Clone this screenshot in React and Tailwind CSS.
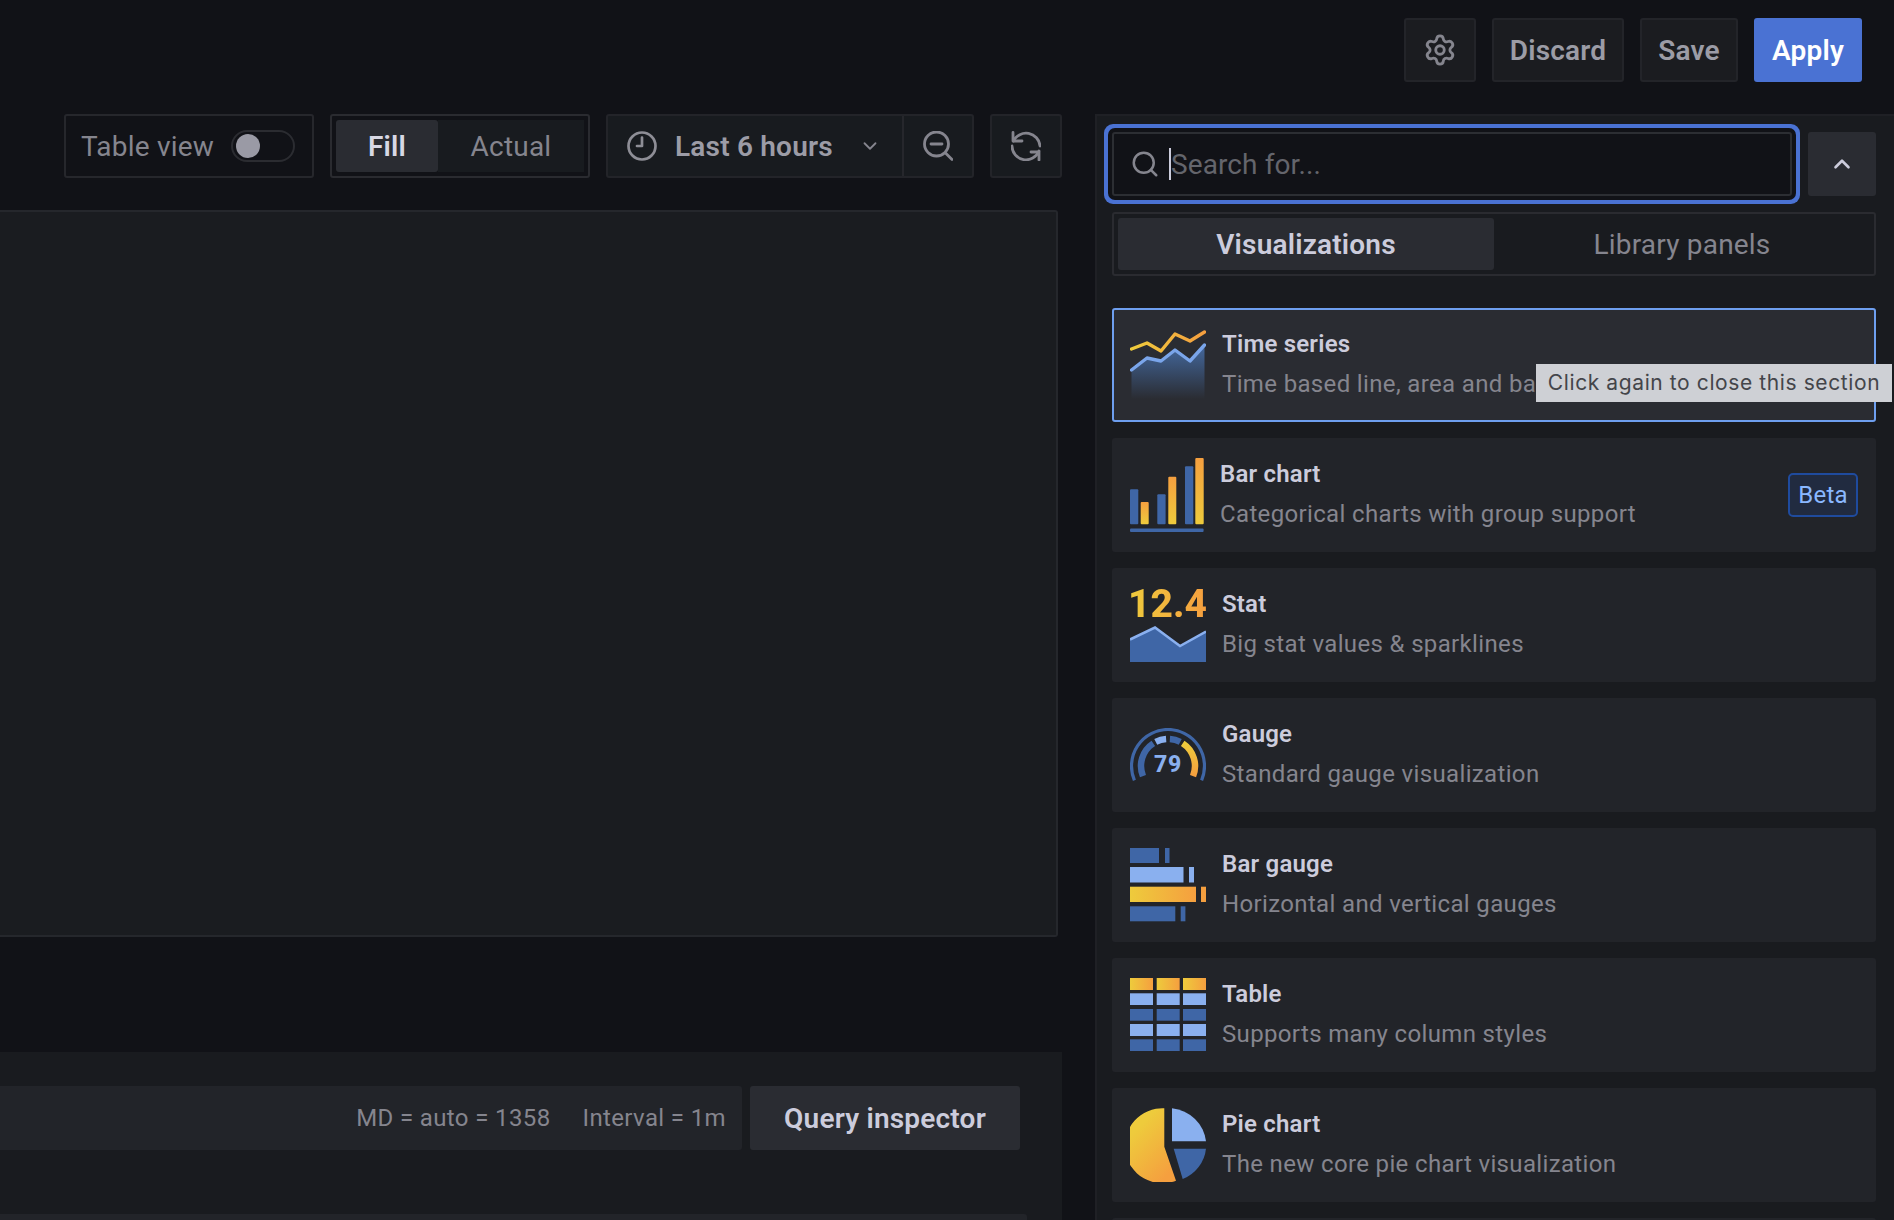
import React from "react";
import { ChevronDown, ChevronUp, Search, Settings } from "lucide-react";

const YELLOW = "#eecb3c";
const ORANGE = "#f59f3f";
const BLUE = "#3f66a6";
const LIGHT = "#8ab0ef";

const Grad = ({ id, vertical, from = YELLOW, to = ORANGE }) => (
  <defs>
    <linearGradient id={id} x1="0" y1={vertical ? "1" : "0"} x2={vertical ? "0" : "1"} y2="0">
      <stop offset="0" stopColor={from} />
      <stop offset="1" stopColor={to} />
    </linearGradient>
  </defs>
);

const TimeSeriesIcon = () => (
  <svg width="76" height="70" viewBox="0 0 76 70">
    <defs>
      <linearGradient id="tsFill" x1="0" y1="0" x2="0" y2="1">
        <stop offset="0" stopColor="#44699f" />
        <stop offset="1" stopColor="#44699f" stopOpacity="0" />
      </linearGradient>
    </defs>
    <Grad id="tsLine" />
    <path d="M1.5 40L17 28L31 31L45 20L60 31L74.5 15V69H1.5Z" fill="url(#tsFill)" />
    <path d="M1.5 40L17 28L31 31L45 20L60 31L74.5 15" fill="none" stroke="#7aa5ea" strokeWidth="3.4" strokeLinecap="round" strokeLinejoin="round" />
    <path d="M1.5 19L17 13L31 21L45 4L60 11L74.5 2" fill="none" stroke="url(#tsLine)" strokeWidth="3.4" strokeLinecap="round" strokeLinejoin="round" />
  </svg>
);

const BarChartIcon = () => (
  <svg width="74" height="74" viewBox="0 0 74 74">
    <Grad id="bcBar" vertical />
    <rect x="0" y="31.3" width="8.3" height="35" rx="1" fill={BLUE} />
    <rect x="10.7" y="44" width="8" height="22.3" rx="1" fill="url(#bcBar)" />
    <rect x="27.3" y="36.3" width="8.3" height="30" rx="1" fill={BLUE} />
    <rect x="38.3" y="18.7" width="8" height="47.6" rx="1" fill="url(#bcBar)" />
    <rect x="55" y="8.3" width="8.3" height="58" rx="1" fill={BLUE} />
    <rect x="65.3" y="0" width="8.4" height="66.3" rx="1" fill="url(#bcBar)" />
    <rect x="0" y="70.4" width="73.6" height="3.6" rx="1" fill={BLUE} />
  </svg>
);

const StatIcon = () => (
  <div className="w-[76px]">
    <div className="-ml-[2px] h-[33px] text-[39px] leading-[33px] font-extrabold tracking-normal bg-linear-to-r from-[#eecb3c] to-[#f59f3f] bg-clip-text text-transparent whitespace-nowrap">
      12.4
    </div>
    <svg width="76" height="41" viewBox="0 33 76 41" className="block">
      <path d="M0 51.5L25 39.5L50 58L76 43.5V74H0Z" fill={BLUE} />
      <path d="M0 51.5L25 39.5L50 58L76 43.5" fill="none" stroke={LIGHT} strokeWidth="2.5" />
    </svg>
  </div>
);

// angles in degrees, clockwise from the top
const arc = (r, a, b) => {
  const pt = (d) => {
    const t = (d * Math.PI) / 180;
    return `${38 + r * Math.sin(t)} ${38 - r * Math.cos(t)}`;
  };
  return `M${pt(a)}A${r} ${r} 0 ${b - a > 180 ? 1 : 0} 1 ${pt(b)}`;
};

const GaugeIcon = () => (
  <svg width="76" height="54" viewBox="0 0 76 54">
    <Grad id="ggArc" vertical from={ORANGE} to={YELLOW} />
    <path d={arc(36.5, -113, 113)} fill="none" stroke={BLUE} strokeWidth="3.2" />
    <path d={arc(27, -112, -33)} fill="none" stroke={BLUE} strokeWidth="6.5" />
    <path d={arc(27, -27, -4)} fill="none" stroke={LIGHT} strokeWidth="6.5" />
    <path d={arc(27, 4, 27)} fill="none" stroke={BLUE} strokeWidth="6.5" />
    <path d={arc(27, 33, 112)} fill="none" stroke="url(#ggArc)" strokeWidth="6.5" />
    <text x="38" y="44" textAnchor="middle" fontFamily="Roboto, sans-serif" fontWeight="800" fontSize="23" letterSpacing="0.8" fill={LIGHT}>
      79
    </text>
  </svg>
);

const BarGaugeIcon = () => (
  <svg width="76" height="74" viewBox="0 0 76 74">
    <Grad id="bgBar" />
    <rect x="0" y="0" width="29" height="15" fill={BLUE} />
    <rect x="35" y="0" width="4.5" height="15" fill={BLUE} />
    <rect x="0" y="19" width="53.5" height="15.5" fill={LIGHT} />
    <rect x="59" y="19" width="5" height="15.5" fill={LIGHT} />
    <rect x="0" y="38.7" width="66" height="15.3" fill="url(#bgBar)" />
    <rect x="71" y="38.7" width="5" height="15.3" fill={ORANGE} />
    <rect x="0" y="58.3" width="45.3" height="15" fill={BLUE} />
    <rect x="50.7" y="58.3" width="4.7" height="15" fill={BLUE} />
  </svg>
);

const TableIcon = () => {
  const rows = [
    [0, 12, "url(#tbTop)"],
    [15.3, 11.7, LIGHT],
    [31, 11.7, BLUE],
    [46, 12, LIGHT],
    [61.3, 11.7, BLUE],
  ];
  return (
    <svg width="76" height="74" viewBox="0 0 76 74">
      <Grad id="tbTop" />
      {rows.map(([y, h, fill]) =>
        [0, 26.7, 53].map((x) => <rect key={`${x}-${y}`} x={x} y={y} width="23" height={h} fill={fill} />)
      )}
    </svg>
  );
};

const PieIcon = () => (
  <svg width="76" height="74" viewBox="0 0 76 74">
    <defs>
      <linearGradient id="pieFill" x1="0.2" y1="0.3" x2="0.7" y2="1">
        <stop offset="0" stopColor={YELLOW} />
        <stop offset="1" stopColor={ORANGE} />
      </linearGradient>
    </defs>
    <path d="M34.3 0.3A37.5 37.5 0 1 0 46 72.7L34.3 38.7Z" fill="url(#pieFill)" />
    <path d="M42 0.3A38 37 0 0 1 76 33.3H42Z" fill={LIGHT} />
    <path d="M43.7 40.7H76A38 37 0 0 1 52.7 71Z" fill={BLUE} />
  </svg>
);

const ClockIcon = () => (
  <svg width="30" height="30" viewBox="0 0 30 30" fill="none" stroke="#8e8e96" strokeWidth="2.7" strokeLinecap="round" strokeLinejoin="round">
    <circle cx="15" cy="15" r="13.5" />
    <path d="M15 6.5V15H10" />
  </svg>
);

const ZoomOutIcon = () => (
  <svg width="30" height="30" viewBox="0 0 30 30" fill="none" stroke="#85858e" strokeWidth="2.8" strokeLinecap="round">
    <circle cx="13.5" cy="13" r="12" />
    <path d="M8 13H19M22.5 22L29 28.5" />
  </svg>
);

const SyncIcon = () => (
  <svg width="30" height="30" viewBox="0 0 30 30" fill="none" stroke="#85858e" strokeWidth="2.8" strokeLinecap="round" strokeLinejoin="round">
    <path d="M2.5 10A14 14 0 0 1 29 15M28 20A14 14 0 0 1 1 15" />
    <path d="M2 1.5V10H11M20 21H28V29" />
  </svg>
);

const vizList = [
  { title: "Time series", desc: "Time based line, area and ba", icon: <TimeSeriesIcon />, active: true },
  { title: "Bar chart", desc: "Categorical charts with group support", icon: <BarChartIcon />, beta: true, narrow: true },
  { title: "Stat", desc: "Big stat values & sparklines", icon: <StatIcon /> },
  { title: "Gauge", desc: "Standard gauge visualization", icon: <GaugeIcon /> },
  { title: "Bar gauge", desc: "Horizontal and vertical gauges", icon: <BarGaugeIcon /> },
  { title: "Table", desc: "Supports many column styles", icon: <TableIcon /> },
  { title: "Pie chart", desc: "The new core pie chart visualization", icon: <PieIcon /> },
];

const VizCard = ({ item }) => (
  <div
    className={`flex items-center h-[114px] shrink-0 rounded-[3px] overflow-hidden ${
      item.active ? "bg-[#2a2c32] border-2 border-[#6e9fef] px-[16px]" : "bg-[#222429] px-[18px]"
    }`}
  >
    <div className={`flex items-center justify-start ${item.narrow ? "w-[74px]" : "w-[76px]"} shrink-0`}>{item.icon}</div>
    <div className="ml-[16px] min-w-0 flex-1 pb-[3px]">
      <div className="text-[24px] leading-[40px] font-semibold text-[#ccccdc] whitespace-nowrap">{item.title}</div>
      <div className="text-[24px] leading-[40px] tracking-[0.35px] text-[#85858e] whitespace-nowrap">{item.desc}</div>
    </div>
    {item.beta && (
      <div className="w-[70px] h-[44px] flex items-center justify-center rounded-[5px] border-2 border-[#1f4b9e] bg-[#212b40] text-[24px] text-[#8ab8ff]">
        Beta
      </div>
    )}
  </div>
);

const App = () => {
  return (
    <div className="relative w-[1894px] h-[1220px] overflow-hidden bg-[#111217] font-['Roboto',sans-serif] tracking-[0.0125em]">
      <div className="flex justify-end h-[114px] pt-[18px] pr-[32px] gap-[16px]">
        <button className="w-[72px] h-[64px] flex items-center justify-center rounded-[3px] bg-[#1b1c20] border-2 border-[#232429] text-[#85858e]">
          <Settings size={34} strokeWidth={2} />
        </button>
        <button className="w-[132px] h-[64px] pt-[2px] rounded-[3px] bg-[#1b1c20] border-2 border-[#232429] text-[28px] font-semibold text-[#9c9ca6]">
          Discard
        </button>
        <button className="w-[98px] h-[64px] pt-[2px] rounded-[3px] bg-[#1b1c20] border-2 border-[#232429] text-[28px] font-semibold text-[#9c9ca6]">
          Save
        </button>
        <button className="w-[108px] h-[64px] pt-[2px] rounded-[3px] bg-[#4a72d3] text-[28px] font-semibold text-white">Apply</button>
      </div>

      <div className="flex h-[1106px]">
        <div className="w-[1095px] shrink-0 flex flex-col overflow-hidden">
          <div className="flex h-[64px] shrink-0 pl-[64px]">
            <div className="w-[250px] flex items-center rounded-[3px] border-2 border-[#26272c] pl-[15px] text-[28px] text-[#85858e]">
              <span className="pt-[2px]">Table view</span>
              <div className="ml-[17px] w-[64px] h-[32px] rounded-full border-2 border-[#2b2c31] flex items-center pl-[3px]">
                <div className="w-[24px] h-[24px] rounded-full bg-[#9a9aa5]" />
              </div>
            </div>
            <div className="ml-[16px] w-[260px] flex items-stretch rounded-[3px] border-2 border-[#2a2b30] p-[4px] text-[28px]">
              <div className="w-[102px] pt-[2px] flex items-center justify-center rounded-[3px] bg-[#2a2c32] font-semibold text-[#d8d8e4]">Fill</div>
              <div className="flex-1 pt-[2px] flex items-center justify-center bg-[#181b1f] text-[#85858e]">Actual</div>
            </div>
            <div className="ml-[16px] w-[368px] flex items-center rounded-[3px] border-2 border-[#232429] bg-[#181b1f] text-[#9c9ca6]">
              <div className="flex-1 flex items-center pl-[19px]">
                <ClockIcon />
                <span className="ml-[18px] pt-[2px] text-[28px] font-semibold">Last 6 hours</span>
                <ChevronDown size={22} strokeWidth={2} className="ml-[26px] text-[#85858e]" />
              </div>
              <div className="w-[70px] h-full flex items-center justify-center border-l-2 border-[#26272c]">
                <ZoomOutIcon />
              </div>
            </div>
            <div className="ml-[16px] w-[72px] flex items-center justify-center rounded-[3px] border-2 border-[#232429] bg-[#181b1f]">
              <SyncIcon />
            </div>
          </div>

          <div className="mt-[32px] w-[1058px] h-[727px] shrink-0 rounded-r-[3px] bg-[#1a1c20] border-t-2 border-r-2 border-b-2 border-[#25272c]" />

          <div className="mt-[115px] w-[1062px] flex-1 min-h-0 overflow-hidden bg-[#191b1f] pt-[34px]">
            <div className="flex h-[64px]">
              <div className="w-[742px] flex items-center justify-end gap-[32px] pr-[16px] rounded-r-[3px] bg-[#222429] text-[24px] tracking-[0.37px] text-[#85858e]">
                <span>MD = auto = 1358</span>
                <span>Interval = 1m</span>
              </div>
              <button className="ml-[8px] w-[270px] pt-[2px] rounded-[3px] bg-[#2a2c32] text-[28px] font-semibold text-[#ccccdc]">
                Query inspector
              </button>
            </div>
            <div className="mt-[64px] w-[1027px] h-[20px] rounded-r-[3px] bg-[#222429]" />
          </div>
        </div>

        <div className="flex-1 bg-[#191b1f] border-l-2 border-t-2 border-[#1f2025] pl-[15px] pr-[18px] flex flex-col">
          <div className="flex h-[64px] mt-[16px] shrink-0">
            <div className="flex-1 h-[64px] flex items-center rounded-[3px] bg-[#111217] border-2 border-[#2c2e33] shadow-[0_0_0_4px_#111217,0_0_0_8px_#4a72d3] pl-[16px] text-[28px] text-[#64656c]">
              <Search size={30} strokeWidth={2} className="text-[#85858e]" />
              <div className="ml-[9px] w-[2px] h-[32px] bg-[#ccccdc]" />
              <span className="pt-[2px] tracking-[0.1px]">Search for...</span>
            </div>
            <button className="ml-[16px] w-[68px] rounded-[3px] bg-[#2a2c32] flex items-center justify-center text-[#ccccdc]">
              <ChevronUp size={26} strokeWidth={2.4} />
            </button>
          </div>

          <div className="mt-[16px] h-[64px] shrink-0 flex rounded-[3px] border-2 border-[#2a2b30] p-[4px] text-[28px]">
            <div className="w-[376px] pt-[2px] flex items-center justify-center rounded-[3px] bg-[#2a2c32] font-semibold text-[#ccccdc]">Visualizations</div>
            <div className="flex-1 pt-[2px] flex items-center justify-center text-[#85858e]">Library panels</div>
          </div>

          <div className="mt-[32px] flex flex-col gap-[16px]">
            {vizList.map((item) => (
              <VizCard key={item.title} item={item} />
            ))}
            <div className="h-[114px] shrink-0 rounded-[3px] bg-[#222429]" />
          </div>
        </div>
      </div>

      <div className="absolute left-[1536px] top-[364px] w-[356px] h-[38px] flex items-center justify-center bg-[#ced0d5] text-[#44454a] text-[21px] font-['Inter',sans-serif] tracking-[0.6px] whitespace-nowrap">
        Click again to close this section
      </div>
    </div>
  );
};

export default App;
